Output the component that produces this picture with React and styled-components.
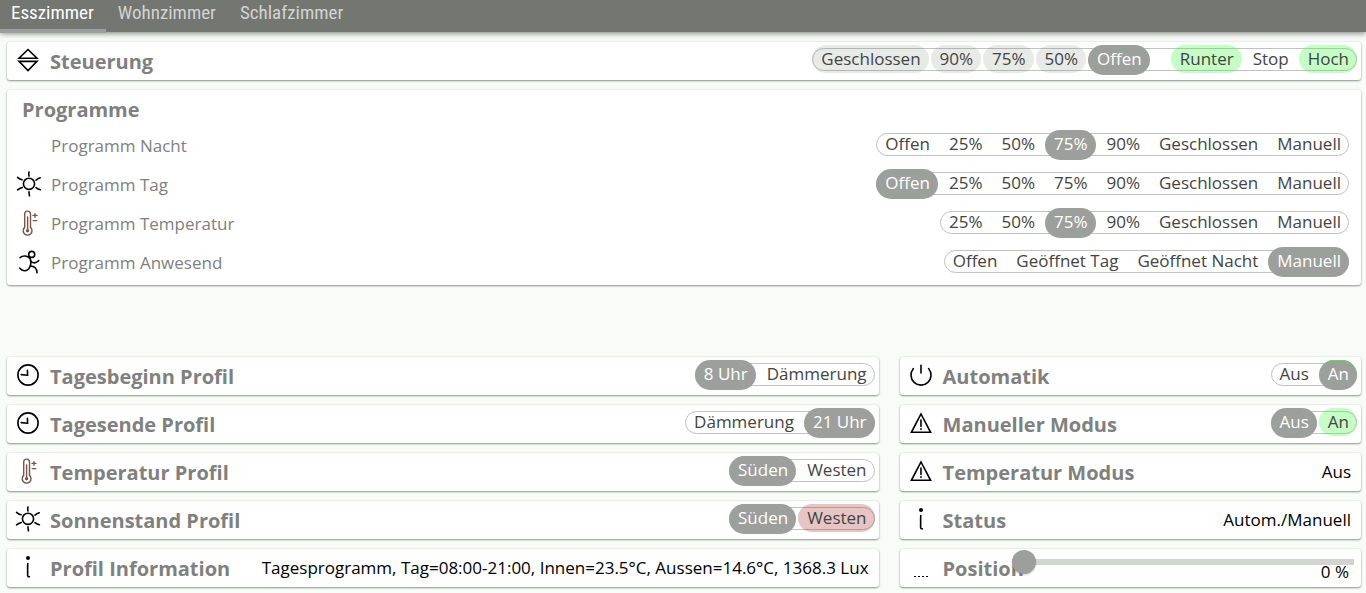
import React, { useState } from "react";
import styled, { createGlobalStyle, css } from "styled-components";

const GlobalStyle = createGlobalStyle`
  *, *::before, *::after { box-sizing: border-box; }
  body {
    margin: 0;
    background: #f9fbf9;
    color: #000;
    font-family: "Open Sans", "Noto Sans", sans-serif;
    font-size: 17px;
  }
  button, input { font: inherit; }
`;

const TabBar = styled.nav`
  display: flex;
  height: 32px;
  background: #747672;
  box-shadow: 0 1px 6px rgba(0, 0, 0, 0.55);
`;

const Tab = styled.button`
  height: 33px;
  padding: 0 12px 3px;
  border: 0;
  border-bottom: 4px solid ${(p) => (p.$active ? "#9c9e9b" : "transparent")};
  background: none;
  color: ${(p) => (p.$active ? "#fff" : "#d2d3d1")};
  font-family: "Roboto Condensed", Roboto, sans-serif;
  font-size: 19px;
  line-height: 22px;
  cursor: pointer;

  &:first-child { padding-left: 11px; }
`;

const Page = styled.main`
  display: flex;
  flex-direction: column;
  gap: 10px;
  padding: 10px 5px 6px 7px;
`;

const Columns = styled.div`
  display: grid;
  grid-template-columns: 17fr 9fr;
  gap: 21px;
  margin-top: 62px;
`;

const Column = styled.div`
  display: flex;
  flex-direction: column;
  gap: 10px;
  min-width: 0;
`;

const cardLook = css`
  border-radius: 3px;
  background: #fefffe;
  box-shadow: 0 1px 2px rgba(0, 0, 0, 0.4), 0 0 2px rgba(0, 0, 0, 0.12);
`;

const Card = styled.section`
  ${cardLook}
  display: flex;
  align-items: center;
  min-height: 38px;
  padding: 0 4px 2px 8px;
`;

const GroupCard = styled.section`
  ${cardLook}
  padding: 0 12px 3px 9px;
`;

const Title = styled.h2`
  margin: 0;
  color: #808080;
  font-size: 20px;
  font-weight: 700;
  line-height: 28px;
  white-space: nowrap;
`;

const CardTitle = styled(Title)`
  padding: 3px 0 0 9px;
`;

const GroupTitle = styled(Title)`
  padding: 6px 0 2px 6px;
`;

const Row = styled.div`
  display: flex;
  align-items: center;
  height: 39px;
  padding-bottom: 2px;
`;

const RowLabel = styled.span`
  padding: 3px 0 0 9px;
  color: #808080;
  line-height: 24px;
`;

const IconBox = styled.span`
  display: flex;
  flex: none;
  width: 26px;
  height: 26px;
`;

const Value = styled.span`
  margin-left: auto;
  padding: 2px 6px 0 12px;
  line-height: 24px;
  white-space: nowrap;
`;

const Segments = styled.div`
  position: relative;
  display: flex;
  gap: 2px;
  height: 30px;
  margin-left: auto;

  &::before {
    content: "";
    position: absolute;
    inset: 3px 0 4px;
    border: 1px solid #bfc2bf;
    border-radius: 12px;
  }
`;

const tones = {
  plain: "transparent",
  grey: "rgba(120, 122, 120, 0.16)",
  green: "rgba(70, 245, 70, 0.3)",
  red: "rgba(170, 40, 40, 0.27)",
};

const Segment = styled.button`
  position: relative;
  height: ${(p) => (p.$active ? 30 : 28)}px;
  padding: ${(p) => (p.$active ? "0 8px 2px 9px" : "0 8px 0 9px")};
  border: 0;
  border-radius: 15px;
  background: ${(p) => (p.$active ? "#9d9f9c" : tones[p.$tone])};
  box-shadow: ${(p) => (p.$active && p.$tone === "green" ? "inset 0 1px 0 #5cd65c" : "none")};
  color: ${(p) => (p.$active ? "#fff" : "#444")};
  line-height: 28px;
  white-space: nowrap;
  cursor: pointer;
`;

const Spacer = styled.span`
  width: 17px;
`;

const SliderArea = styled.div`
  display: grid;
  flex: 1;
  height: 34px;
  margin: 0 3px 0 -12px;

  > * { grid-area: 1 / 1; }
`;

const Slider = styled.input`
  z-index: 1;
  width: 100%;
  height: 24px;
  margin: 0;
  appearance: none;
  background: none;

  &::-webkit-slider-runnable-track {
    height: 6px;
    background: #d2d4d1;
  }
  &::-webkit-slider-thumb {
    appearance: none;
    width: 24px;
    height: 24px;
    margin-top: -9px;
    border-radius: 50%;
    background: #9d9f9c;
    box-shadow: 0 1px 2px rgba(0, 0, 0, 0.2);
  }
`;

const SliderValue = styled.output`
  z-index: 2;
  align-self: end;
  justify-self: end;
  padding-right: 5px;
  line-height: 24px;
  pointer-events: none;
`;

const drawings = {
  blind: (
    <>
      <path d="M13 2.5 L22 11.2 H4 Z" />
      <path d="M4 14.4 H22 L13 23.5 Z" />
    </>
  ),
  sun: (
    <>
      <circle cx="13" cy="12.8" r="5.6" />
      <path d="M13 1 q-.6 2 0 4 M13 20.8 q0 2 .5 4 M1.6 6.4 q2 2 4.5 2.4 M1.6 18.8 q2-1.6 4.6-2.4 M24.2 6.8 q-2.2.6-4.2 2.4 M20 16.6 q2 1.6 4.4 2.2" />
    </>
  ),
  thermo: (
    <g stroke="#795548" strokeWidth="1.4">
      <path d="M8.7 17.4 V4 a2.9 2.9 0 0 1 5.8 0 V17.4 a4.4 4.4 0 1 1-5.8 0 Z" />
      <path d="M11.6 7 V20" />
      <circle cx="11.6" cy="20.8" r="1" />
      <path d="M17 5.4 H21 M19 3.6 V7.2 M17.2 10.6 H20.8" />
    </g>
  ),
  runner: (
    <>
      <circle cx="15.7" cy="5.4" r="3" />
      <path d="M4 8.6 C7 6.2 11.5 6.6 14 9.4 C15.6 12.6 15.5 15.8 12.8 19.8 C10 23 6.2 22 3.9 19.2" />
      <path d="M14.4 12 C17 14.4 20.3 14 22.7 11.6" />
      <path d="M14.4 17 C18.5 17 20.8 18.7 21 23.8" />
    </>
  ),
  clock: (
    <>
      <circle cx="13" cy="13" r="10.1" />
      <path d="M12.4 8.4 L12.6 13.2 L6.2 12.6" />
    </>
  ),
  info: (
    <>
      <circle cx="13" cy="3.9" r="2" fill="#000" stroke="none" />
      <path d="M12.8 9.6 C12.4 13 12.8 17 12.6 20.8 Q12.6 23 14.4 22.8" />
    </>
  ),
  power: (
    <>
      <path d="M13 3.4 V11" />
      <path d="M5.4 6.6 A10 10 0 1 0 20.6 6.6" />
    </>
  ),
  warning: (
    <>
      <path d="M13 4 L22.6 22.3 H3.4 Z" />
      <path d="M13 10 V16.4 M13 18.8 V19.4" />
    </>
  ),
  dots: <path d="M6 22.5 H21" strokeWidth="1" strokeDasharray="2 2" strokeLinecap="butt" />,
};

function Icon({ name }) {
  return (
    <IconBox>
      {name && (
        <svg
          width="26"
          height="26"
          viewBox="0 0 26 26"
          fill="none"
          stroke="#000"
          strokeWidth="1.6"
          strokeLinecap="round"
          aria-hidden="true"
        >
          {drawings[name]}
        </svg>
      )}
    </IconBox>
  );
}

// An option is a plain label or a [label, tone] pair; null leaves a gap.
function Choice({ label, options, initial }) {
  const [selected, setSelected] = useState(initial);
  return (
    <Segments role="group" aria-label={label}>
      {options.map((option, i) => {
        if (!option) return <Spacer key={i} />;
        const [text, tone] = Array.isArray(option) ? option : [option, "plain"];
        return (
          <Segment
            key={i}
            type="button"
            $tone={tone}
            $active={selected === text}
            aria-pressed={selected === text}
            onClick={() => setSelected(text)}
          >
            {text}
          </Segment>
        );
      })}
    </Segments>
  );
}

function Setting({ icon, title, children }) {
  return (
    <Card>
      <Icon name={icon} />
      <CardTitle>{title}</CardTitle>
      {children}
    </Card>
  );
}

function ChoiceSetting({ icon, title, options, initial }) {
  return (
    <Setting icon={icon} title={title}>
      <Choice label={title} options={options} initial={initial} />
    </Setting>
  );
}

function PositionSetting() {
  const [position, setPosition] = useState(0);
  return (
    <Setting icon="dots" title={<label htmlFor="position">Position</label>}>
      <SliderArea>
        <Slider
          id="position"
          type="range"
          min="0"
          max="100"
          value={position}
          onChange={(e) => setPosition(e.target.value)}
        />
        <SliderValue htmlFor="position">{position} %</SliderValue>
      </SliderArea>
    </Setting>
  );
}

const rooms = ["Esszimmer", "Wohnzimmer", "Schlafzimmer"];

const programmes = [
  { label: "Programm Nacht", initial: "75%", options: ["Offen", "25%", "50%", "75%", "90%", "Geschlossen", "Manuell"] },
  { label: "Programm Tag", icon: "sun", initial: "Offen", options: ["Offen", "25%", "50%", "75%", "90%", "Geschlossen", "Manuell"] },
  { label: "Programm Temperatur", icon: "thermo", initial: "75%", options: ["25%", "50%", "75%", "90%", "Geschlossen", "Manuell"] },
  { label: "Programm Anwesend", icon: "runner", initial: "Manuell", options: ["Offen", "Geöffnet Tag", "Geöffnet Nacht", "Manuell"] },
];

export default function App() {
  const [room, setRoom] = useState(rooms[0]);
  return (
    <>
      <GlobalStyle />
      <TabBar>
        {rooms.map((name) => (
          <Tab key={name} type="button" $active={room === name} onClick={() => setRoom(name)}>
            {name}
          </Tab>
        ))}
      </TabBar>
      <Page>
        <ChoiceSetting
          icon="blind"
          title="Steuerung"
          initial="Offen"
          options={[
            ["Geschlossen", "grey"],
            ["90%", "grey"],
            ["75%", "grey"],
            ["50%", "grey"],
            "Offen",
            null,
            ["Runter", "green"],
            "Stop",
            ["Hoch", "green"],
          ]}
        />
        <GroupCard>
          <GroupTitle>Programme</GroupTitle>
          {programmes.map((p) => (
            <Row key={p.label}>
              <Icon name={p.icon} />
              <RowLabel>{p.label}</RowLabel>
              <Choice label={p.label} options={p.options} initial={p.initial} />
            </Row>
          ))}
        </GroupCard>
        <Columns>
          <Column>
            <ChoiceSetting icon="clock" title="Tagesbeginn Profil" options={["8 Uhr", "Dämmerung"]} initial="8 Uhr" />
            <ChoiceSetting icon="clock" title="Tagesende Profil" options={["Dämmerung", "21 Uhr"]} initial="21 Uhr" />
            <ChoiceSetting icon="thermo" title="Temperatur Profil" options={["Süden", "Westen"]} initial="Süden" />
            <ChoiceSetting icon="sun" title="Sonnenstand Profil" options={["Süden", ["Westen", "red"]]} initial="Süden" />
            <Setting icon="info" title="Profil Information">
              <Value>Tagesprogramm, Tag=08:00-21:00, Innen=23.5°C, Aussen=14.6°C, 1368.3 Lux</Value>
            </Setting>
          </Column>
          <Column>
            <ChoiceSetting icon="power" title="Automatik" options={["Aus", ["An", "green"]]} initial="An" />
            <ChoiceSetting icon="warning" title="Manueller Modus" options={["Aus", ["An", "green"]]} initial="Aus" />
            <Setting icon="warning" title="Temperatur Modus">
              <Value>Aus</Value>
            </Setting>
            <Setting icon="info" title="Status">
              <Value>Autom./Manuell</Value>
            </Setting>
            <PositionSetting />
          </Column>
        </Columns>
      </Page>
    </>
  );
}
